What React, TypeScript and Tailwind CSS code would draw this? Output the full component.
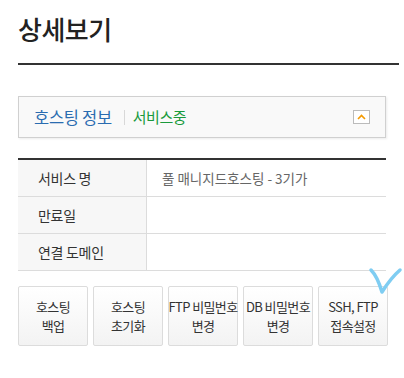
import React from 'react';

const rows = [
  { label: '서비스 명', value: '풀 매니지드호스팅 - 3기가' },
  { label: '만료일', value: '' },
  { label: '연결 도메인', value: '' },
];

const buttons = [
  ['호스팅', '백업'],
  ['호스팅', '초기화'],
  ['FTP 비밀번호', '변경'],
  ['DB 비밀번호', '변경'],
  ['SSH, FTP', '접속설정'],
];

export default function App() {
  return (
    <div
      className="relative w-[404px] h-[378px] bg-white overflow-hidden"
      style={{ fontFamily: '"Noto Sans CJK KR", "Noto Sans", sans-serif' }}
    >
      <div className="pl-[18px] pr-[5px] pt-[11px]">
        <h1 className="text-[26px] leading-[36px] font-medium text-[#222] tracking-[-0.5px]">상세보기</h1>
        <div className="mt-[16px] h-[2px] bg-[#333]" />
      </div>

      <div className="ml-[18px] w-[368px]">
        <div className="mt-[31px] h-[42px] border border-[#d0d0d0] bg-[#f9f9f9] shadow-[1px_1px_2px_rgba(0,0,0,0.08)] flex items-center pl-[15px] pr-[15px]">
          <span className="text-[16.5px] text-[#2a6cb0] tracking-[-0.3px]">호스팅 정보</span>
          <span className="ml-[12px] mr-[8px] w-px h-[15px] bg-[#d8d8d8]" />
          <span className="text-[15px] text-[#1a9a3c] tracking-[-0.5px]">서비스중</span>
          <span className="ml-auto w-[17px] h-[14px] border border-[#bbb] bg-white flex items-center justify-center">
            <svg width="9" height="6" viewBox="0 0 9 6">
              <path d="M1 5 L4.5 1.5 L8 5" fill="none" stroke="#f59a00" strokeWidth="1.6" />
            </svg>
          </span>
        </div>

        <div className="mt-[20px] border-t-2 border-[#333]">
          {rows.map((r) => (
            <div key={r.label} className="flex h-[37px] border-b border-[#dcdcdc]">
              <div className="w-[129px] bg-[#f7f7f7] border-r border-[#dcdcdc] flex items-center pl-[20px] text-[14px] text-[#333] tracking-[-0.3px]">
                {r.label}
              </div>
              <div className="flex-1 flex items-center pl-[15px] text-[13.5px] text-[#666]">{r.value}</div>
            </div>
          ))}
        </div>
      </div>

      <div className="ml-[18px] mt-[15px] flex gap-[5px]">
        {buttons.map((b, i) => (
          <div
            key={i}
            className="w-[70px] h-[60px] rounded-[2px] border border-[#dcdcdc] bg-gradient-to-b from-white to-[#f3f3f3] flex flex-col items-center justify-center text-[13px] leading-[19px] text-[#333] tracking-[-0.6px] whitespace-nowrap"
          >
            <span>{b[0]}</span>
            <span>{b[1]}</span>
          </div>
        ))}
      </div>

      <svg className="absolute left-[366px] top-[264px]" width="38" height="34" viewBox="0 0 38 34">
        <path
          d="M5 6 C9 10 13 18 16 28 C21 20 27 12 34 6"
          fill="none"
          stroke="#7fcdf2"
          strokeWidth="3.5"
          strokeLinecap="round"
          strokeLinejoin="round"
        />
      </svg>
    </div>
  );
}
